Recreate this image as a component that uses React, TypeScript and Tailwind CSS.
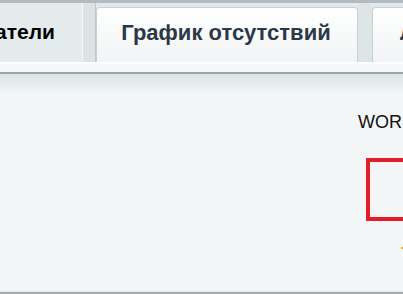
export default function App() {
  return (
    <div className="w-[403px] h-[294px] overflow-hidden flex flex-col bg-[#f3f6f7] font-['Liberation_Sans',Arial,sans-serif]">
      {/* Top frame */}
      <div className="h-[3px] bg-[#b4babd]" />

      {/* Tabs */}
      <div className="h-[59px] flex items-end bg-[#e2e9eb] overflow-hidden">
        <div className="w-[83px] h-full shrink-0 flex items-center justify-end overflow-hidden bg-[#e4ebec] border-r border-[#f4f7f8] pr-[27px]">
          <span className="text-[21px] font-bold text-black whitespace-nowrap pb-[2px]">Пользователи</span>
        </div>
        <div className="w-[13px] h-full shrink-0 bg-[#dbe3e5] border-r border-[#c2c9cc]" />
        <div className="w-[262px] h-[55px] shrink-0 flex items-center justify-center rounded-t-[4px] border border-b-0 border-[#c9d0d3] bg-gradient-to-b from-white to-[#f1f4f5]">
          <span className="text-[22px] font-bold text-[#2c3846] whitespace-nowrap pb-[5px] pr-[2px]">График отсутствий</span>
        </div>
        <div className="w-[14px] h-full shrink-0 bg-[#dde5e7]" />
        <div className="w-[60px] h-[55px] shrink-0 flex items-center rounded-t-[4px] border border-b-0 border-[#c9d0d3] bg-gradient-to-b from-white to-[#f1f4f5] pl-[27px]">
          <span className="text-[22px] font-bold text-[#2c3846] whitespace-nowrap pb-[5px]">Лента</span>
        </div>
      </div>

      {/* Under-tab lines */}
      <div className="h-[10px] bg-[#f4f7f8] border-t-2 border-white" />
      <div className="h-[2px] bg-[#9ea4a6]" />
      <div className="h-[20px] bg-gradient-to-b from-[#dbe4e5] to-[#f3f6f7]" />

      {/* Content */}
      <div className="flex-1 flex flex-col pl-[358px] overflow-hidden">
        <span className="text-[18px] text-[#111] whitespace-nowrap leading-[20px] mt-[18px]">WORKTIME</span>
        <div className="ml-[8px] mt-[26px] w-[80px] h-[63px] shrink-0 border-4 border-[#e51d2a]" />
        <div className="ml-[43px] mt-[26px] w-[3px] h-[2px] bg-[#f0a830]" />
      </div>

      {/* Bottom frame */}
      <div className="h-[3px] bg-[#a6acae] border-t border-[#e4e8ea]" />
    </div>
  );
}
